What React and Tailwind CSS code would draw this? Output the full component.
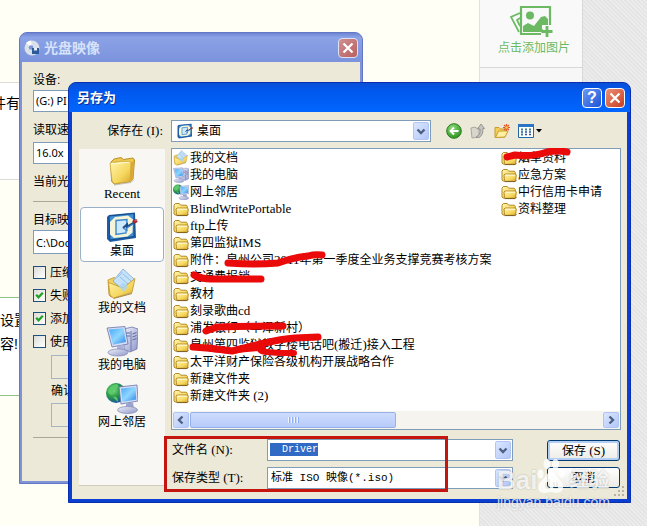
import { Fragment } from "react";

const folders = [
  { name: "我的文档", icon: "docs" },
  { name: "我的电脑", icon: "computer" },
  { name: "网上邻居", icon: "network" },
  { name: "BlindWritePortable" },
  { name: "ftp上传" },
  { name: "第四监狱IMS" },
  { name: "附件：泉州公司2011年第一季度全业务支撑竞赛考核方案" },
  { name: "交通费报销" },
  { name: "教材" },
  { name: "刻录歌曲cd" },
  { name: "浦发银行（丰泽新村）" },
  { name: "泉州第四监狱教学楼电话吧(搬迁)接入工程" },
  { name: "太平洋财产保险各级机构开展战略合作" },
  { name: "新建文件夹" },
  { name: "新建文件夹 (2)" },
];

const moreFolders = [
  { name: "烟草资料" },
  { name: "应急方案" },
  { name: "中行信用卡申请" },
  { name: "资料整理" },
];

const places = [
  { name: "Recent", icon: "folder" },
  { name: "桌面", icon: "desktop", active: true },
  { name: "我的文档", icon: "docs" },
  { name: "我的电脑", icon: "computer" },
  { name: "网上邻居", icon: "network" },
];

const options = [
  { id: "compress", label: "压缩", checked: false },
  { id: "fail", label: "失败", checked: true },
  { id: "append", label: "添加", checked: true },
  { id: "use", label: "使用", checked: false },
];

// Latin runs are set in a serif beside the Chinese characters
function Text({ children }) {
  return children.split(/([\x20-\x7e]+)/).map((part, i) =>
    i % 2 ? (
      <span
        key={i}
        className="font-['Liberation_Serif','Noto_Sans_CJK_SC',serif] text-[13px] leading-none whitespace-pre"
      >
        {part}
      </span>
    ) : (
      <Fragment key={i}>{part}</Fragment>
    )
  );
}

function Gradients() {
  return (
    <svg className="absolute w-0 h-0" aria-hidden="true">
      <defs>
        <linearGradient id="gold" x1="0" y1="0" x2="1" y2="1">
          <stop offset="0" stopColor="#fff6b0" />
          <stop offset="0.6" stopColor="#f6d860" />
          <stop offset="1" stopColor="#d9a62c" />
        </linearGradient>
        <linearGradient id="screen" x1="0" y1="0" x2="1" y2="1">
          <stop offset="0" stopColor="#4aa8f5" />
          <stop offset="0.5" stopColor="#8fd6ff" />
          <stop offset="1" stopColor="#2f86e4" />
        </linearGradient>
        <linearGradient id="metal" x1="0" y1="0" x2="1" y2="1">
          <stop offset="0" stopColor="#eef0fb" />
          <stop offset="1" stopColor="#8f97c8" />
        </linearGradient>
        <radialGradient id="globe" cx="0.35" cy="0.35" r="0.7">
          <stop offset="0" stopColor="#7fe08a" />
          <stop offset="0.5" stopColor="#2c9a46" />
          <stop offset="1" stopColor="#1450a8" />
        </radialGradient>
        <radialGradient id="greenBall" cx="0.4" cy="0.3" r="0.75">
          <stop offset="0" stopColor="#8fdc78" />
          <stop offset="1" stopColor="#2a8f1f" />
        </radialGradient>
      </defs>
    </svg>
  );
}

function SmallFolder() {
  return (
    <svg viewBox="0 0 16 16" className="w-4 h-4 shrink-0" aria-hidden="true">
      <path d="M1 13V4.200l1.300-1.700h4l1.400 1.700h5.600l1 1.200V13l-1 1H2z" fill="url(#gold)" stroke="#b18a2c" />
      <path d="M4 7h10.500l.8 1-.6 5.600-.9.700H4.600L3.500 13.500 3 8z" fill="url(#gold)" stroke="#b08420" strokeWidth="0.900" />
      <path d="M4.500 8.200h9.500" stroke="#fffbdc" />
      <path d="M3.500 14.600h10.800l1.100-1.500" fill="none" stroke="#6d5216" strokeWidth="0.800" />
    </svg>
  );
}

function Icon({ name, className }) {
  if (name === "folder") {
    return (
      <svg viewBox="0 0 32 32" className={className} aria-hidden="true">
        <path d="M5 8l3-3 7-1.500 2.500 2L27 4l1.500 2-1.500 19-3 2.500L8 30l-2.500-3z" fill="#edc94f" stroke="#b98f28" />
        <path d="M4 9.500L6 8l3 .3 8-1.300 1.500 1L24 7.500l1 1.500-.8 18.500L8 29.800 6 27z" fill="url(#gold)" stroke="#c9a23a" strokeWidth="0.800" />
        <path d="M25 9l3.200-3L27 25l-2.800 2.500z" fill="#dba932" />
        <path d="M5 10l18.500-1.800" fill="none" stroke="#fffbd6" />
        <path d="M8 31l17-2.500 3-3" fill="none" stroke="#8a887a" strokeOpacity="0.500" />
      </svg>
    );
  }
  if (name === "desktop") {
    return (
      <svg viewBox="0 0 32 32" className={className} aria-hidden="true">
        <path d="M3 4L29 1.500 30 27 4 31 1 28V6z" fill="#1d5fae" />
        <path d="M3 5l25-2.500v23L4 29z" fill="#3f8fd4" stroke="#17497f" />
        <path d="M9 6l13-1.500 5 4-.5 13-5 4L8 27l-4-3.500V11z" fill="#f5f3d8" />
        <path d="M10 9.500l11-1-1 13.500-10 1.500z" fill="#cde9fb" stroke="#3d87c9" strokeWidth="1.400" />
        <path d="M17 17l4-3.500v2L28 11.500" fill="none" stroke="#1c4c88" strokeWidth="2" />
        <path d="M17 17l4 2.500V17l6-4" fill="none" stroke="#3d87c9" strokeWidth="1.200" />
        <path d="M27 11.500l4-2" stroke="#8e2a34" strokeWidth="3.500" />
        <path d="M28.500 10l2.500-1" stroke="#e24a4a" strokeWidth="1.500" />
      </svg>
    );
  }
  if (name === "docs") {
    return (
      <svg viewBox="0 0 32 32" className={className} aria-hidden="true">
        <path d="M2 12l6-2.500L11 11l2 17-8 1-2-2z" fill="#f2d15c" stroke="#b98f28" strokeWidth="0.800" />
        <path d="M17 1l11 10-9 13L7 13z" fill="#c6e2f8" stroke="#7fa8cf" strokeWidth="0.800" />
        <path d="M16.500 4l-5 5.500M17 6l8 7M14 9l8 7" stroke="#8fbde6" />
        <path d="M2.500 14.500L17 20l12-9.500-3 14L7.500 30 4 27z" fill="url(#gold)" stroke="#c09630" strokeWidth="0.800" />
        <path d="M17 14l5 4.500-4 5.500-5-5z" fill="#a8d3f4" fillOpacity="0.800" />
        <path d="M7.500 30.500L26 25.500" stroke="#a68a45" />
      </svg>
    );
  }
  if (name === "computer") {
    return (
      <svg viewBox="0 0 32 32" className={className} aria-hidden="true">
        <path d="M18 4l8-2 6 2-1 20-7 3-6-3z" fill="url(#metal)" stroke="#7078ad" strokeWidth="0.800" />
        <path d="M25 6v20" stroke="#7078ad" />
        <path d="M20 8h4M20 11h4M26.500 9l4-1.500M26.500 12l4-1.500M26.500 15l4-1.500" stroke="#5d66a0" />
        <path d="M1 3l18-1.500L22 19 6 22z" fill="#d7ddf4" stroke="#6672a8" strokeWidth="0.800" />
        <path d="M3 4.500l14.500-1.200L20 17 7 19.800z" fill="url(#screen)" />
        <path d="M11 21l6-1 1 6h-7z" fill="#aab0d8" />
        <ellipse cx="12" cy="27.500" rx="10" ry="3.500" fill="url(#metal)" stroke="#8890bd" strokeWidth="0.800" />
      </svg>
    );
  }
  return (
    <svg viewBox="0 0 32 32" className={className} aria-hidden="true">
      <circle cx="10" cy="11" r="10" fill="url(#globe)" />
      <path d="M2 9q4-7 9-7 3 3-1 5t-3 5q-4 2-5-3M7 15q5-1 5 5" fill="#5cc96a" />
      <path d="M13 5l18-2 1 16-17 3z" fill="#d7ddf4" stroke="#6672a8" strokeWidth="0.800" />
      <path d="M15 6.500L29.500 5l.8 12.500L16.500 20z" fill="url(#screen)" />
      <path d="M20 21.500l7-1 1 6h-8z" fill="#9aa2d0" />
      <ellipse cx="21.500" cy="28" rx="10" ry="3.500" fill="url(#metal)" stroke="#8890bd" strokeWidth="0.800" />
    </svg>
  );
}

function FileColumn({ items, className }) {
  return (
    <ul className={className}>
      {items.map((item) => (
        <li key={item.name} className="h-[17px] flex items-center gap-px leading-4 whitespace-nowrap">
          {item.icon ? <Icon name={item.icon} className="w-4 h-4 shrink-0" /> : <SmallFolder />}
          <span>
            <Text>{item.name}</Text>
          </span>
        </li>
      ))}
    </ul>
  );
}

function Arrow({ d = "M3.500 5.500L7 9l3.500-3.500" }) {
  return (
    <svg viewBox="0 0 14 14" className="w-3.5 h-3.5" aria-hidden="true">
      <path d={d} fill="none" stroke="#4d6185" strokeWidth="2.400" />
    </svg>
  );
}

const arrowBox =
  "w-4 flex items-center justify-center rounded-xs border border-[#b0c4f6] bg-linear-to-br from-[#dbe6fe] to-[#b3c8f8]";

function Checkbox({ id, label, checked }) {
  return (
    <div className="flex items-center gap-1 h-[23px]">
      <span className="grid w-[13px] h-[13px]">
        <input
          id={id}
          type="checkbox"
          defaultChecked={checked}
          className="peer appearance-none col-start-1 row-start-1 w-[13px] h-[13px] border border-[#1c5180] bg-linear-to-br from-[#dcdcd7] to-white"
        />
        <svg
          viewBox="0 0 13 13"
          className="col-start-1 row-start-1 w-[13px] h-[13px] invisible peer-checked:visible pointer-events-none"
          aria-hidden="true"
        >
          <path d="M3.200 5.800l2.300 2.500 4.300-4.500" fill="none" stroke="#21a121" strokeWidth="2.200" />
        </svg>
      </span>
      <label htmlFor={id}>{label}</label>
    </div>
  );
}

function CloseIcon() {
  return (
    <svg viewBox="0 0 18 18" className="w-[18px] h-[18px]" aria-hidden="true">
      <path d="M4.500 4.500l9 9M13.500 4.500l-9 9" stroke="#fff" strokeWidth="2.200" />
    </svg>
  );
}

function Background() {
  return (
    <div className="flex min-h-screen text-sm leading-6 bg-[#e9e9e9] bg-[repeating-linear-gradient(45deg,#e4e4e4_0px,#e4e4e4_1px,#ececec_2px,#ececec_3px)]">
      <main className="flex-1 bg-[#fffff5] border-r border-[#e2e2da]">
        <div className="h-[82px]" />
        <p className="h-[98px] border-y border-[#dcdcdc] bg-white pt-2 -indent-2">件有</p>
        <div className="h-[117px]" />
        <div className="h-[99px] border-y border-[#8fc286] bg-white pt-2.5">
          <p>设置</p>
          <p>容!</p>
        </div>
      </main>
      <aside className="w-[103px] h-[470px] bg-[#f7f7f7] border-r border-[#d8d8d8]">
        <button className="w-full h-[68px] pt-[5px] flex flex-col items-center border-b border-[#d8d8d8] bg-[#f9f9f9] text-xs text-[#6cb964]">
          <svg viewBox="0 0 44 33" className="w-11 h-[33px]" fill="none" stroke="#6cb964" aria-hidden="true">
            <path d="M41 20V2H12v27h20" strokeWidth="2.200" />
            <path d="M11 8L2 12l8 15M11 13l-3 2 3 6" strokeWidth="1.700" />
            <circle cx="21" cy="10.500" r="4" fill="#6cb964" stroke="none" />
            <path d="M14 27v-6l5-3 6 3 7-9 4-1 3 3v6h-6v4l3 2v1z" fill="#6cb964" stroke="none" />
            <path d="M38 21v11M32.500 26.500h11" strokeWidth="2.800" />
          </svg>
          <span className="leading-5 pl-1.5">点击添加图片</span>
        </button>
      </aside>
      <div className="w-[64px]" />
    </div>
  );
}

function DiscImageWindow() {
  return (
    <section className="absolute left-[19px] right-[284px] top-8 rounded-t-lg border border-[#6377c4] bg-[#8093d6] px-0.5 pb-0.5 overflow-hidden">
      <header className="h-[29px] -mx-0.5 px-1 flex items-center gap-1 bg-linear-to-b from-[#6d86d2] via-[#8ba2e6] via-15% to-[#7b93dc]">
        <svg viewBox="0 0 16 16" className="w-4 h-4" aria-hidden="true">
          <circle cx="8" cy="8" r="7.500" fill="#d9e2ea" />
          <path d="M8 8L2 3a7.500 7.500 0 0 1 5-2.500z" fill="#fff" />
          <circle cx="7" cy="7.500" r="2.300" fill="#7f98d4" />
          <path d="M8 8h7v6H8z" fill="#2d5a9b" />
          <path d="M10 8h3v2.500h-3z" fill="#e8eef8" />
        </svg>
        <h2 className="flex-1 text-sm font-bold text-[#d6e2fa]">光盘映像</h2>
        <button
          aria-label="关闭"
          className="w-5 h-5 flex items-center justify-center rounded-sm border border-[#dbe2f6] bg-linear-to-br from-[#d08f92] to-[#b9605f]"
        >
          <CloseIcon />
        </button>
      </header>
      <form className="bg-[#ece9d8] px-[11px] pt-2">
        <label htmlFor="device" className="block h-5 leading-5">设备:</label>
        <select id="device" className="appearance-none block w-full h-[22px] px-0.5 border border-[#7f9db9] bg-white font-['Noto_Sans'] text-[11px]">
          <option>(G:) PI</option>
        </select>
        <label htmlFor="speed" className="block h-[30px] pt-2 leading-5">读取速</label>
        <select id="speed" className="appearance-none block w-full h-[22px] px-0.5 border border-[#7f9db9] bg-white font-['Noto_Sans'] text-[11px]">
          <option>16.0x</option>
        </select>
        <p className="h-[38px] pt-2 leading-5 border-b border-[#aca899]">当前光</p>
        <label htmlFor="target" className="block h-7 pt-2 leading-5">目标映</label>
        <input
          id="target"
          defaultValue="C:\Doc"
          className="block w-full h-6 px-0.5 border border-[#7f9db9] bg-white font-['Noto_Sans'] text-[11px]"
        />
        <div className="pt-[7px]">
          {options.map((option) => (
            <Checkbox key={option.id} {...option} />
          ))}
        </div>
        <div className="pl-[18px] pt-0.5">
          <input aria-label="密码" disabled className="block w-full h-6 border border-[#a5b5c4]" />
          <label htmlFor="confirm" className="block h-6 leading-6">确认</label>
          <input id="confirm" disabled className="block w-full h-6 border border-[#a5b5c4]" />
        </div>
        <div className="mt-2.5 h-11 border-t border-[#aca899]" />
      </form>
    </section>
  );
}

function Toolbar() {
  return (
    <div className="w-[196px] pl-[15px] flex items-center gap-2">
      <button type="button" aria-label="后退">
        <svg viewBox="0 0 16 16" className="w-4 h-4" aria-hidden="true">
          <circle cx="8" cy="8" r="7.300" fill="url(#greenBall)" stroke="#2a7d22" />
          <path d="M12.500 8H5M8 4.500L4.500 8 8 11.500" fill="none" stroke="#fff" strokeWidth="1.900" />
        </svg>
      </button>
      <button type="button" aria-label="向上一级">
        <svg viewBox="0 0 16 16" className="w-4 h-4" aria-hidden="true">
          <path d="M1 5l4-1 1 1 3 .5V14l-7 1z" fill="#d7d5cc" stroke="#aaa89e" />
          <path d="M6 14q5-2 4-8H7.500L11 1l3.500 4.500H13q0 7-4 9z" fill="#c6c5c0" stroke="#8e8d88" strokeWidth="0.900" />
        </svg>
      </button>
      <button type="button" aria-label="新建文件夹">
        <svg viewBox="0 0 16 16" className="w-4 h-4" aria-hidden="true">
          <path d="M1 14.500V4.500h4L6.500 6H11v8z" fill="#f4cf57" stroke="#c79b30" />
          <path d="M1.500 14.500L4.500 8H14l-3 6z" fill="#fff0a0" stroke="#c79b30" />
          <path d="M12.500 1v7M9 4.500h7M10 2l5 5M15 2l-5 5" stroke="#e0562a" strokeWidth="1.200" />
          <circle cx="12.500" cy="4.500" r="1.300" fill="#ffd05a" />
        </svg>
      </button>
      <button type="button" aria-label="查看" className="flex items-center gap-0.5">
        <svg viewBox="0 0 16 16" className="w-4 h-4" aria-hidden="true">
          <path d="M.5 1.500h15v13H.5z" fill="#fff" stroke="#2367a8" />
          <path d="M0 1h16v3H0z" fill="#2b74c4" />
          <path d="M3 6.500h2M7 6.500h2M11 6.500h2M3 11.500h2" stroke="#3f7f8c" strokeWidth="1.800" />
          <path d="M3 9h2M7 9h2M11 9h2M7 11.500h2M11 11.500h2" stroke="#2f4fa5" strokeWidth="1.600" />
        </svg>
        <svg viewBox="0 0 6 4" className="w-1.5 h-1" aria-hidden="true">
          <path d="M0 0h6L3 3.500z" />
        </svg>
      </button>
    </div>
  );
}

function FileList() {
  return (
    <div className="relative border border-[#7f9db9] bg-white">
      <div className="flex h-[262px] pl-px">
        <FileColumn items={folders} className="w-[328px]" />
        <FileColumn items={moreFolders} className="flex-1" />
      </div>
      <div className="flex h-[18px] p-px bg-[#f5f4ee]">
        <button type="button" aria-label="向左滚动" className={arrowBox}>
          <Arrow d="M8.500 3.500L5 7l3.500 3.500" />
        </button>
        <div className="flex-1 mx-px">
          <div className="w-1/2 h-full flex items-center justify-center gap-px rounded-xs border border-[#98b0e8] bg-linear-to-b from-[#cddcfe] to-[#b7cbfa]">
            {[0, 1, 2, 3].map((n) => (
              <i key={n} className="w-px h-1.5 bg-[#eef4fe] border-r border-[#8cb0f8] box-content" />
            ))}
          </div>
        </div>
        <button type="button" aria-label="向右滚动" className={arrowBox}>
          <Arrow d="M5.500 3.500L9 7l-3.500 3.500" />
        </button>
      </div>
      {/* red marker strokes over the private names */}
      <svg
        viewBox="0 0 450 282"
        className="absolute -left-px -top-px w-[450px] h-[282px] pointer-events-none"
        fill="none"
        stroke="#ea0a0a"
        strokeWidth="7"
        strokeLinecap="round"
        strokeLinejoin="round"
        aria-hidden="true"
      >
        <path d="M336 9L344 7Q362 9 376 4Q386 2 396 4" />
        <path d="M57 115Q84 117 107 115Q124 109 137 108Q144 106 151 107" />
        <path d="M23 127Q31 131 40 131L90 131" />
        <path d="M35 183L46 179Q80 178 112 178" />
        <path d="M22 199Q42 200 61 203Q80 198 94 195Q110 191 124 190L147 189" />
        <path d="M40 201L61 203Q76 200 92 200Q80 205 123 205" strokeWidth="6" />
      </svg>
    </div>
  );
}

function SaveAsDialog() {
  return (
    <section className="absolute left-[68px] right-4 top-[82px] rounded-t-lg bg-[#0b3fd0] border border-[#0a2fae] px-[3px] pb-[3px]">
      <header className="h-[29px] -mx-[3px] pl-2 pr-[5px] flex items-center gap-[3px] rounded-t-[7px] bg-linear-to-b from-[#0a4fd8] via-[#0058ee] via-30% to-[#0266ff]">
        <h1 className="flex-1 text-[13px] font-bold text-white text-shadow-[1px_1px_#0f2f90]">另存为</h1>
        <button
          aria-label="帮助"
          className="w-5 h-5 rounded-sm border border-white bg-linear-to-br from-[#6b98f5] to-[#1f50d8] font-['Liberation_Sans'] text-base leading-[18px] font-bold text-white"
        >
          ?
        </button>
        <button
          aria-label="关闭"
          className="w-5 h-5 flex items-center justify-center rounded-sm border border-white bg-linear-to-br from-[#ec9078] to-[#c73a18]"
        >
          <CloseIcon />
        </button>
      </header>

      <form className="bg-[#ece9d8] pt-2 pb-2.5" onSubmit={(e) => e.preventDefault()}>
        <div className="flex items-center">
          <label htmlFor="lookin" className="w-[91px] text-right">
            <Text>保存在 (I):</Text>
          </label>
          <div className="flex-1 ml-2 h-[22px] p-px flex items-stretch border border-[#7f9db9] bg-white">
            <Icon name="desktop" className="w-4 h-4 ml-1 self-center" />
            <select id="lookin" className="appearance-none flex-1 pl-1">
              <option>桌面</option>
            </select>
            <span className={arrowBox}>
              <Arrow />
            </span>
          </div>
          <Toolbar />
        </div>

        <div className="mt-1.5 flex pl-[7px] pr-1.5 gap-1.5">
          <nav className="w-[86px] mt-px mb-[3px] px-px pt-px flex flex-col gap-0.5 bg-[#f8f7f3] border-b border-[#cfccbd]">
            {places.map((place) => (
              <button
                key={place.name}
                type="button"
                className={`h-[55px] flex flex-col items-center rounded-sm border pt-[3px] ${
                  place.active ? "border-[#98b0c8] bg-white" : "border-transparent"
                }`}
              >
                <Icon name={place.icon} className="w-8 h-8" />
                <span className="leading-4">
                  <Text>{place.name}</Text>
                </span>
              </button>
            ))}
          </nav>

          <div className="flex-1 min-w-0">
            <FileList />
            <div className="relative mt-[9px] flex gap-[34px]">
              <div className="flex-1 flex flex-col gap-1.5">
                <div className="flex items-center">
                  <label htmlFor="filename" className="w-24 pl-px">
                    <Text>文件名 (N):</Text>
                  </label>
                  <div className="flex-1 min-w-0 h-[22px] p-px flex border border-[#7f9db9] bg-white">
                    <input
                      id="filename"
                      autoFocus
                      onFocus={(e) => e.target.select()}
                      defaultValue="  Driver"
                      className="flex-1 min-w-0 px-px outline-none caret-transparent font-['Liberation_Mono',monospace] text-[10px] selection:bg-[#316ac5] selection:text-white"
                    />
                    <button type="button" aria-label="最近的文件名" className={arrowBox}>
                      <Arrow />
                    </button>
                  </div>
                </div>
                <div className="flex items-center">
                  <label htmlFor="filetype" className="w-24 pl-px">
                    <Text>保存类型 (T):</Text>
                  </label>
                  <div className="flex-1 min-w-0 h-[22px] p-px flex border border-[#7f9db9] bg-white">
                    <select
                      id="filetype"
                      className="appearance-none flex-1 min-w-0 pl-0.5 font-['Liberation_Mono','Noto_Sans_CJK_SC',monospace] text-[11px]"
                    >
                      <option>标准 ISO 映像(*.iso)</option>
                    </select>
                    <span className={arrowBox}>
                      <Arrow />
                    </span>
                  </div>
                </div>
              </div>
              <div className="w-[74px] pr-px pt-px flex flex-col gap-1.5">
                <button className="h-[21px] rounded-[3px] border border-[#003c74] bg-linear-to-b from-white to-[#ecebe6] inset-ring-2 inset-ring-[#b3cdf5]">
                  <Text>保存 (S)</Text>
                </button>
                <button type="button" className="h-[21px] rounded-[3px] border border-[#003c74] bg-linear-to-b from-white to-[#ecebe6]">
                  取消
                </button>
              </div>
              <div className="absolute -left-[7px] -top-[3px] w-[284px] h-[56px] border-3 border-[#c4150f] pointer-events-none" />
            </div>
          </div>
        </div>
        <svg viewBox="0 0 12 12" className="absolute right-1 bottom-1 w-3 h-3" fill="#b8b4a2" aria-hidden="true">
          <path d="M8 0h2v2H8zM8 4h2v2H8zM8 8h2v2H8zM4 4h2v2H4zM4 8h2v2H4zM0 8h2v2H0z" />
        </svg>
      </form>
    </section>
  );
}

function Watermark() {
  return (
    <div className="absolute right-[34px] top-[456px] w-[116px] text-white/80 font-['Liberation_Sans','Noto_Sans_CJK_SC',sans-serif] text-shadow-[0_0_2px_#00000040] pointer-events-none">
      <div className="flex items-end h-[38px]">
        <span className="text-[26px] leading-7 font-bold">Bai</span>
        <svg viewBox="0 0 28 36" className="w-7 h-9" fill="currentColor" aria-hidden="true">
          <ellipse cx="3.500" cy="16" rx="3" ry="4.500" />
          <ellipse cx="10" cy="6" rx="3.500" ry="5" />
          <ellipse cx="18.500" cy="6" rx="3.500" ry="5" />
          <ellipse cx="25" cy="15" rx="3" ry="4.500" />
          <path
            fillRule="evenodd"
            d="M14 14c4 0 5 5 9 8 5 4 4 13-3 13-3 0-4-1-6-1s-4 1-7 1c-7 0-7-9-2-13 4-3 5-8 9-8zM11 21v3c-4 0-4 7 0 7h2V21zm5 3v5q0 2 2 2h3v-7h-2v5h-1v-5z"
          />
        </svg>
        <span className="text-xl leading-7 font-bold ml-1">经验</span>
      </div>
      <p className="text-sm leading-4">jingyan.baidu.com</p>
    </div>
  );
}

export default function App() {
  return (
    <div className="relative min-h-screen overflow-hidden font-['Liberation_Sans','Noto_Sans_CJK_SC',sans-serif] text-xs text-black">
      <Gradients />
      <Background />
      <DiscImageWindow />
      <SaveAsDialog />
      <Watermark />
    </div>
  );
}
